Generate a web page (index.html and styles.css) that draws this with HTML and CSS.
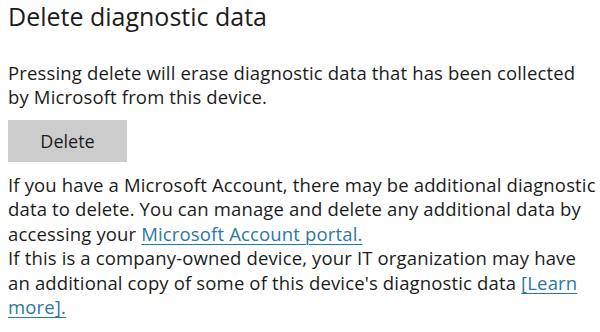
FILE: index.html
```html
<!DOCTYPE html>
<html>
<head>
<meta charset="utf-8">
<link rel="stylesheet" href="styles.css">
</head>
<body>
<div class="page">
  <h1 class="title">Delete diagnostic data</h1>
  <p class="text intro">Pressing delete will erase diagnostic data that has been collected<br>by Microsoft from this device.</p>
  <button class="btn">Delete</button>
  <p class="text more">If you have a Microsoft Account, there may be additional diagnostic<br>data to delete. You can manage and delete any additional data by<br>accessing your <a class="link" href="#">Microsoft Account portal.</a><br>If this is a company-owned device, your IT organization may have<br>an additional copy of some of this device's diagnostic data <a class="link" href="#">[Learn<br>more].</a></p>
</div>
</body>
</html>
```

FILE: styles.css
```css
html, body {
  margin: 0;
  padding: 0;
  background: #ffffff;
}
.page {
  width: 600px;
  height: 332px;
  overflow: hidden;
  padding: 0 0 0 8px;
  box-sizing: border-box;
  font-family: "Open Sans", "Noto Sans", sans-serif;
  color: #1c1c1c;
  white-space: nowrap;
}
.title {
  margin: 0;
  font-weight: 400;
  font-size: 25px;
  line-height: 32px;
}
.text {
  margin: 0;
  font-size: 18.5px;
  letter-spacing: 0.15px;
}
.intro {
  margin-top: 29px;
  line-height: 24px;
}
.btn {
  display: block;
  margin: 11px 0 0;
  width: 119px;
  height: 42px;
  border: none;
  background: #cccccc;
  color: #1c1c1c;
  font-family: inherit;
  font-size: 18px;
  padding: 0;
}
.more {
  margin-top: 10.5px;
  line-height: 24.5px;
}
.link {
  color: #2a78a8;
  text-decoration: underline;
  text-decoration-thickness: 1px;
  text-underline-offset: 3px;
}
```
